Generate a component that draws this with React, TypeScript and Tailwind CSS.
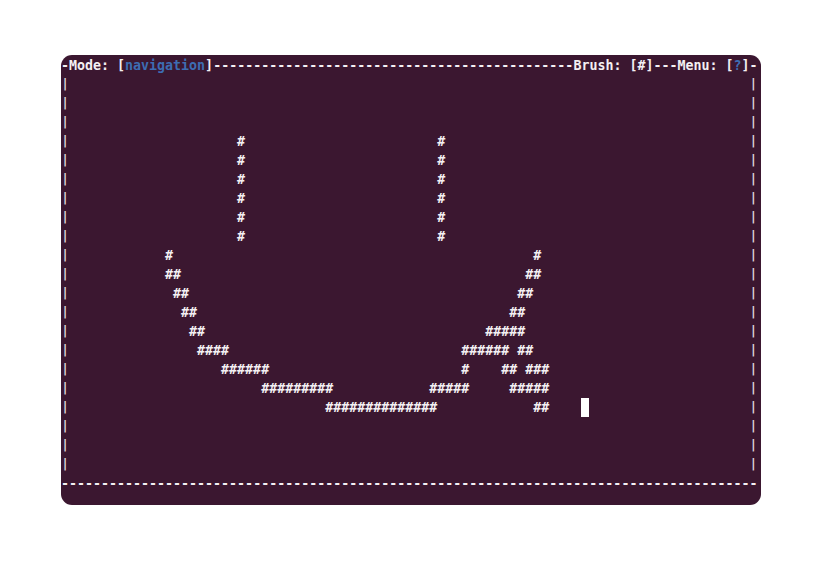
import React from "react";

const COLS = 87;
const ROWS = 23;

// drawing cells: [row, startCol, length]
const STROKES: [number, number, number][] = [
  [4, 22, 1], [5, 22, 1], [6, 22, 1], [7, 22, 1], [8, 22, 1], [9, 22, 1],
  [4, 47, 1], [5, 47, 1], [6, 47, 1], [7, 47, 1], [8, 47, 1], [9, 47, 1],
  [10, 13, 1], [10, 59, 1],
  [11, 13, 2], [11, 58, 2],
  [12, 14, 2], [12, 57, 2],
  [13, 15, 2], [13, 56, 2],
  [14, 16, 2], [14, 53, 5],
  [15, 17, 4], [15, 50, 6], [15, 57, 2],
  [16, 20, 6], [16, 50, 1], [16, 55, 2], [16, 58, 3],
  [17, 25, 9], [17, 46, 5], [17, 56, 5],
  [18, 33, 14], [18, 59, 2],
];

const CURSOR = { row: 18, col: 65 };

const buildGrid = () => {
  const grid: string[][] = [];
  for (let r = 0; r < ROWS; r++) grid.push(Array(COLS).fill(" "));
  STROKES.forEach(([r, c, n]) => {
    for (let i = 0; i < n; i++) grid[r][c + i] = "#";
  });
  return grid;
};

// side border "|" kept as text, a bit shorter than the row like the terminal glyph
const Edge = () => (
  <span className="inline-block w-[8px] h-[19px] align-top text-center text-[12px] leading-[19px] font-bold text-[#ddd4da]">
    |
  </span>
);

const TopBar = () => (
  <div className="h-[19px] leading-[19px] whitespace-pre">
    <span>-Mode: [</span>
    <span className="text-[#3d6db3]">navigation</span>
    <span>]{"-".repeat(45)}Brush: [#]---Menu: [</span>
    <span className="text-[#3d6db3]">?</span>
    <span>]-</span>
  </div>
);

const CanvasRow = ({ cells, row }: { cells: string[]; row: number }) => {
  const inner = cells.slice(1, COLS - 1).join("");
  if (row !== CURSOR.row) {
    return (
      <div className="h-[19px] leading-[19px] whitespace-pre">
        <Edge />
        {inner}
        <Edge />
      </div>
    );
  }
  const before = inner.slice(0, CURSOR.col - 1);
  const after = inner.slice(CURSOR.col);
  return (
    <div className="h-[19px] leading-[19px] whitespace-pre">
      <Edge />
      {before}
      <span className="inline-block w-[8px] h-[19px] align-top bg-white"></span>
      {after}
      <Edge />
    </div>
  );
};

export default function App() {
  const grid = buildGrid();
  return (
    <div className="w-[822px] h-[572px] bg-white pt-[55px] pl-[61px]">
      <div
        className="w-[700px] h-[450px] pt-px rounded-[11px] bg-[#3b1730] text-[#f4f0f3] font-bold text-[13.3px] overflow-hidden"
        style={{ fontFamily: '"DejaVu Sans Mono", "Liberation Mono", monospace' }}
      >
        <TopBar />
        {grid.slice(1, ROWS - 1).map((cells, i) => (
          <CanvasRow key={i} cells={cells} row={i + 1} />
        ))}
        <div className="h-[19px] leading-[19px] whitespace-pre">{"-".repeat(COLS)}</div>
      </div>
    </div>
  );
}
